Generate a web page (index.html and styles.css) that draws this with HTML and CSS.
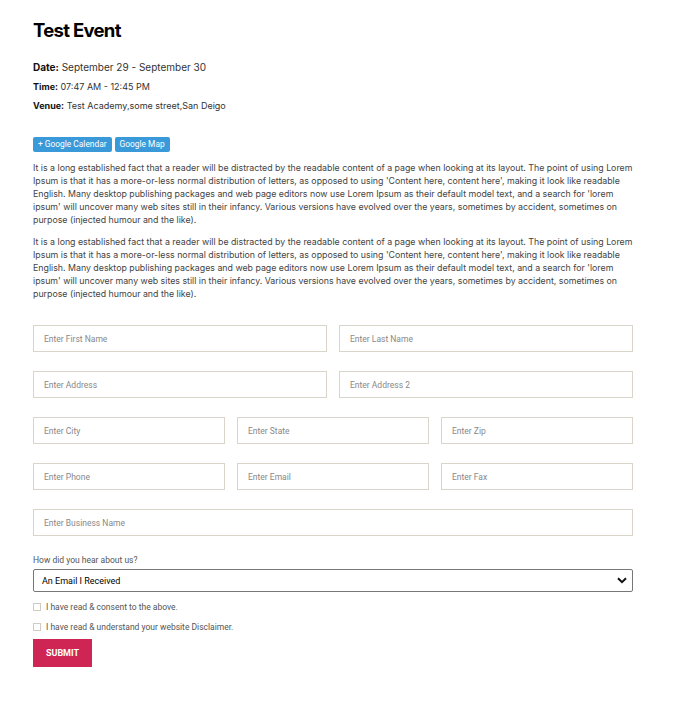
FILE: index.html
```html
<!DOCTYPE html>
<html>
<head>
<meta charset="utf-8">
<link rel="stylesheet" href="styles.css">
</head>
<body>
<div class="page">
  <h1 class="title">Test Event</h1>
  <div class="meta">
    <p class="meta-line date"><b>Date:</b> September 29 - September 30</p>
    <p class="meta-line"><b>Time:</b> 07:47 AM - 12:45 PM</p>
    <p class="meta-line"><b>Venue:</b> Test Academy,some street,San Deigo</p>
  </div>
  <div class="btns">
    <a class="btn">+ Google Calendar</a>
    <a class="btn">Google Map</a>
  </div>
  <p class="desc">It is a long established fact that a reader will be distracted by the readable content of a page when looking at its layout. The point of using Lorem Ipsum is that it has a more-or-less normal distribution of letters, as opposed to using 'Content here, content here', making it look like readable English. Many desktop publishing packages and web page editors now use Lorem Ipsum as their default model text, and a search for 'lorem ipsum' will uncover many web sites still in their infancy. Various versions have evolved over the years, sometimes by accident, sometimes on purpose (injected humour and the like).</p>
  <p class="desc">It is a long established fact that a reader will be distracted by the readable content of a page when looking at its layout. The point of using Lorem Ipsum is that it has a more-or-less normal distribution of letters, as opposed to using 'Content here, content here', making it look like readable English. Many desktop publishing packages and web page editors now use Lorem Ipsum as their default model text, and a search for 'lorem ipsum' will uncover many web sites still in their infancy. Various versions have evolved over the years, sometimes by accident, sometimes on purpose (injected humour and the like).</p>
  <form class="form">
    <div class="row two">
      <input class="field" placeholder="Enter First Name">
      <input class="field" placeholder="Enter Last Name">
    </div>
    <div class="row two">
      <input class="field" placeholder="Enter Address">
      <input class="field" placeholder="Enter Address 2">
    </div>
    <div class="row three">
      <input class="field" placeholder="Enter City">
      <input class="field" placeholder="Enter State">
      <input class="field" placeholder="Enter Zip">
    </div>
    <div class="row three">
      <input class="field" placeholder="Enter Phone">
      <input class="field" placeholder="Enter Email">
      <input class="field" placeholder="Enter Fax">
    </div>
    <div class="row one">
      <input class="field" placeholder="Enter Business Name">
    </div>
    <label class="sel-label">How did you hear about us?</label>
    <div class="select">
      <span>An Email I Received</span>
      <svg class="chev" width="10" height="7" viewBox="0 0 10 7"><path d="M1 1.2 L5 5.2 L9 1.2" fill="none" stroke="#111" stroke-width="2"/></svg>
    </div>
    <label class="check"><span class="box"></span>I have read &amp; consent to the above.</label>
    <label class="check"><span class="box"></span>I have read &amp; understand your website Disclaimer.</label>
    <button type="button" class="submit">SUBMIT</button>
  </form>
</div>
</body>
</html>
```
FILE: styles.css
```css
* { box-sizing: border-box; }
body {
  margin: 0;
  background: #fff;
  font-family: Inter, "Noto Sans", sans-serif;
  color: #333;
}
.page {
  width: 600px;
  margin-left: 33px;
  padding-top: 19px;
}
.title {
  margin: 0;
  font-size: 18.5px;
  font-weight: 700;
  letter-spacing: -0.7px;
  color: #000;
  line-height: 23px;
}
.meta { margin-top: 16px; }
.meta-line {
  margin: 0;
  font-size: 9px;
  line-height: 19px;
  color: #333;
}
.meta-line b { color: #111; font-weight: 700; }
.meta-line.date { font-size: 10px; }
.btns {
  display: flex;
  gap: 3px;
  margin-top: 22px;
}
.btn {
  background: #3a9ad9;
  color: #fff;
  font-family: Roboto, "Liberation Sans", sans-serif;
  font-size: 8.4px;
  height: 15px;
  line-height: 15px;
  padding: 0 5px;
  border-radius: 2px;
}
.desc {
  margin: 9px 0 0;
  font-size: 8.8px;
  line-height: 13px;
  color: #444;
}
.desc + .desc { margin-top: 9px; }
.form { margin-top: 25px; }
.row {
  display: grid;
  gap: 12px;
  margin-bottom: 19px;
}
.row.two { grid-template-columns: 1fr 1fr; }
.row.three { grid-template-columns: 1fr 1fr 1fr; }
.row.one { grid-template-columns: 1fr; margin-bottom: 18px; }
.field {
  height: 27px;
  border: 1px solid #d9d5ca;
  padding: 0 10px;
  font-family: Roboto, "Liberation Sans", sans-serif;
  font-size: 8.5px;
  color: #333;
  outline: none;
  background: #fff;
}
.field::placeholder { color: #888; }
.sel-label {
  display: block;
  font-family: Roboto, "Liberation Sans", sans-serif;
  font-size: 8.5px;
  color: #555;
  line-height: 12px;
  margin-bottom: 3px;
}
.select {
  height: 23px;
  border: 1px solid #777;
  border-radius: 2px;
  display: flex;
  align-items: center;
  justify-content: space-between;
  padding: 0 5px 0 8px;
  font-family: Roboto, "Liberation Sans", sans-serif;
  font-size: 9px;
  color: #000;
  margin-bottom: 5px;
}
.check {
  display: flex;
  align-items: center;
  gap: 5px;
  font-family: Roboto, "Liberation Sans", sans-serif;
  font-size: 8.5px;
  color: #555;
  height: 20px;
}
.box {
  width: 8px;
  height: 8px;
  border: 1px solid #d0ccc2;
  display: inline-block;
}
.submit {
  margin-top: 2px;
  width: 59px;
  height: 28px;
  background: #cf2554;
  color: #fff;
  border: none;
  font-family: Roboto, "Liberation Sans", sans-serif;
  font-weight: 700;
  font-size: 9px;
  padding: 0;
}
```
